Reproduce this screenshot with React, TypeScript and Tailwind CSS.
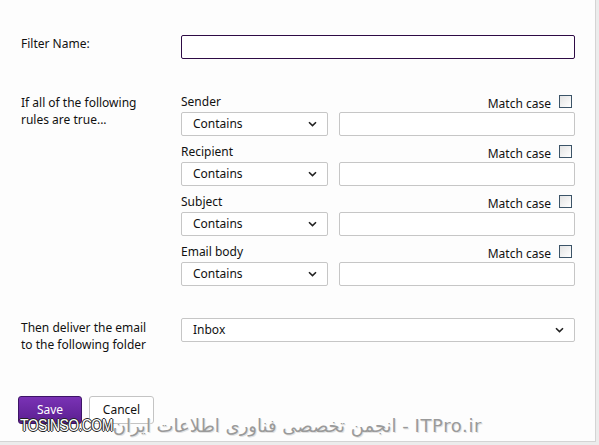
import React from "react"

const font = "font-['Noto_Sans','Open_Sans',sans-serif]"

function Chevron() {
  return (
    <svg width="9" height="6" viewBox="0 0 9 6" className="shrink-0">
      <path d="M1 1.2 L4.5 4.6 L8 1.2" fill="none" stroke="#222" strokeWidth="1.6" />
    </svg>
  )
}

function Select({ value, wide }: { value: string; wide?: boolean }) {
  return (
    <div
      className={`${wide ? "w-[394px]" : "w-[147px]"} h-[24px] flex items-center justify-between border border-[#c6c6c6] rounded-[2px] bg-white pl-[11px] pr-[10px] text-[12px] text-[#111]`}
    >
      <span>{value}</span>
      <Chevron />
    </div>
  )
}

function Rule({ label }: { label: string }) {
  return (
    <div className="flex flex-col mb-[7px]">
      <div className="h-[19px] flex items-start justify-between">
        <span className="text-[12px] leading-[16px] mt-[1px] text-[#111]">{label}</span>
        <div className="flex items-start gap-[8px] pr-[3px]">
          <span className="text-[12px] leading-[16px] mt-[3px] text-[#111]">Match case</span>
          <span className="w-[13px] h-[13px] mt-[2px] border border-[#3c5468] bg-gradient-to-br from-[#e4e4e4] to-white" />
        </div>
      </div>
      <div className="flex gap-[11px]">
        <Select value="Contains" />
        <div className="w-[236px] h-[24px] border border-[#c6c6c6] rounded-[2px] bg-white" />
      </div>
    </div>
  )
}

export default function App() {
  return (
    <div className={`relative w-[599px] h-[445px] bg-[#ececec] overflow-hidden ${font}`}>
      <div className="w-[596px] h-[442px] bg-[#fdfdfd] border-r border-b border-[#d4d4d4] pl-[21px] pt-[35px]">
        {/* filter name */}
        <div className="flex">
          <div className="w-[160px] text-[12px] leading-[17px] text-[#111]">Filter Name:</div>
          <div className="w-[394px] h-[24px] border border-[#2e0b45] rounded-[2px] bg-white" />
        </div>

        {/* rules */}
        <div className="flex mt-[34px]">
          <div className="w-[160px] pt-[1px] text-[12px] leading-[17px] text-[#111]">
            If all of the following
            <br />
            rules are true...
          </div>
          <div className="w-[394px] flex flex-col">
            <Rule label="Sender" />
            <Rule label="Recipient" />
            <Rule label="Subject" />
            <Rule label="Email body" />
          </div>
        </div>

        {/* folder */}
        <div className="flex mt-[25px]">
          <div className="w-[160px] pt-[1px] text-[12px] leading-[17px] text-[#111]">
            Then deliver the email
            <br />
            to the following folder
          </div>
          <Select value="Inbox" wide />
        </div>

        {/* buttons */}
        <div className="flex gap-[7px] mt-[43px] -ml-[3px]">
          <button className="w-[64px] h-[28px] rounded-[3px] border border-[#3d1466] bg-gradient-to-b from-[#7a32b5] to-[#5b1f91] text-white text-[12px]">
            Save
          </button>
          <button className="w-[65px] h-[28px] rounded-[3px] border border-[#c4c4c4] bg-white text-[#111] text-[12px]">
            Cancel
          </button>
        </div>
      </div>

      {/* watermark */}
      <div className="absolute left-[20px] top-[412px] flex items-baseline whitespace-nowrap">
        <span className="inline-block origin-bottom scale-y-[1.2] font-['Liberation_Sans',sans-serif] text-[14px] tracking-[-0.6px] text-white [text-shadow:1px_0_0_#222,-1px_0_0_#222,0_1px_0_#222,0_-1px_0_#222]">
          TOSINSO.COM
        </span>
        <span className="font-['DejaVu_Sans',sans-serif] text-[18px] tracking-[0.6px] text-[#9a9a9a] [text-shadow:1px_1px_0_#e2e2e2]">
          انجمن تخصصی فناوری اطلاعات ایران - ITPro.ir
        </span>
      </div>
    </div>
  )
}
